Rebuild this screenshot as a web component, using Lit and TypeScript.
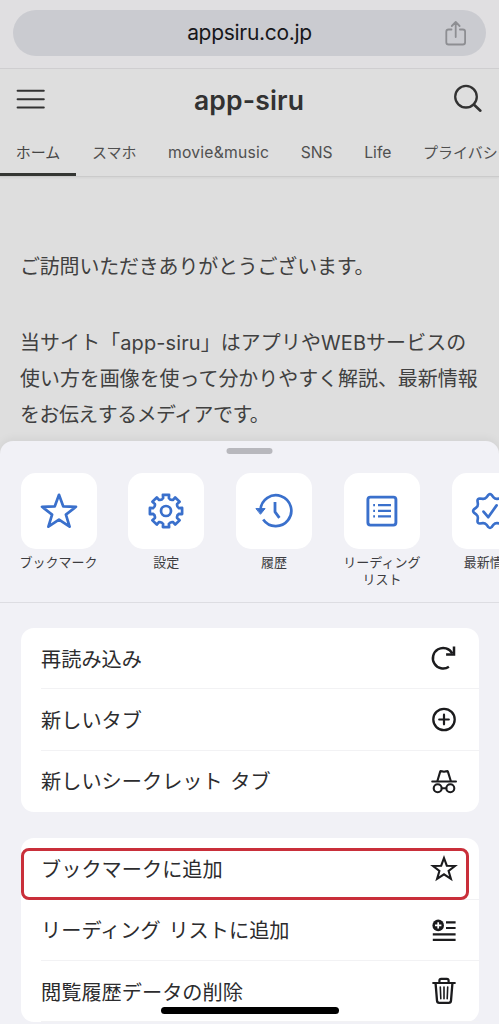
import { LitElement, html, svg, css } from "lit";
import { customElement } from "lit/decorators.js";

const pt = (r: number, a: number) =>
  `${(18 + r * Math.cos(a)).toFixed(2)} ${(18 + r * Math.sin(a)).toFixed(2)}`;

// Eight-toothed gear outline centred on (18, 18)
const gearPath = (() => {
  let d = "";
  for (let i = 0; i < 8; i++) {
    const a = (i * Math.PI) / 4 - Math.PI / 2;
    d += `${i ? "L" : "M"}${pt(13.2, a - 0.22)} L${pt(16.4, a - 0.19)} L${pt(16.4, a + 0.19)} L${pt(13.2, a + 0.22)} Q${pt(11.4, a + Math.PI / 8)} ${pt(13.2, a + Math.PI / 4 - 0.22)} `;
  }
  return d + "Z";
})();

// Eight-pointed badge with soft tips
const badgePath = (() => {
  let d = "";
  for (let i = 0; i < 8; i++) {
    const a = (i * Math.PI) / 4 - Math.PI / 2;
    d += `${i ? "L" : "M"}${pt(16.2, a - 0.1)} Q${pt(17.6, a)} ${pt(16.2, a + 0.1)} L${pt(14, a + 0.26)} Q${pt(13, a + Math.PI / 8)} ${pt(14, a + Math.PI / 4 - 0.26)} `;
  }
  return d + "Z";
})();

const starPath =
  "M18 1.8 22.2 13.3 35 13.8 24.9 21.6 28.6 33.7 18 26.6 7.4 33.7 11.1 21.6 1 13.8 13.8 13.3Z";

const icons: Record<string, unknown> = {
  star: svg`<path d=${starPath} stroke-width="2.7"/>`,
  gear: svg`<path d=${gearPath} stroke-width="2.7"/><circle cx="18" cy="18" r="5" stroke-width="2.7"/>`,
  history: svg`<path d="M4.5 17A15.4 15.4 0 1 1 7.2 26.4" stroke-width="2.7" stroke-linecap="butt"/><path d="M.3 15.6H9.1L4.7 21Z" fill="currentColor" stroke-width="1"/><path d="M19 9V18.8L23.4 24.8" stroke-width="2.8" stroke-linecap="butt"/>`,
  list: svg`<rect x="3.9" y="4.1" width="28" height="28" rx="2.5" stroke-width="2.9"/><path d="M14 12.2H27M14 17.8H27M14 23.3H27M9.2 12.2h1.8M9.2 17.8h1.8M9.2 23.3h1.8" stroke-width="2.2" stroke-linecap="butt"/>`,
  badge: svg`<path d=${badgePath} stroke-width="2.6"/><path d="M11.5 18.6 16.2 24.2 24.6 12.4" stroke-width="2.7"/>`,
};

const rowIcons: Record<string, unknown> = {
  reload: svg`<path d="M22.3 9.4A10.3 10.3 0 1 0 18.9 22.8" stroke-width="2.5" stroke-linecap="butt"/><path d="M24 2.6V10.4H16.1" stroke-width="2.5" stroke-linecap="butt" stroke-linejoin="miter"/>`,
  plus: svg`<circle cx="14" cy="14.5" r="10.7" stroke-width="2.3"/><path d="M14 9.7V19.3M9.2 14.5H18.8" stroke-width="2.2"/>`,
  incognito: svg`<path d="M2.2 14.4H26" stroke-width="2"/><path d="M7.4 14 10.2 4.6Q10.4 3.9 11.2 4.1L14 4.7 16.9 4.1Q17.6 3.9 17.9 4.6L20.8 14" stroke-width="2.1"/><circle cx="7.7" cy="21.3" r="4" stroke-width="2.1"/><circle cx="20.3" cy="21.3" r="4" stroke-width="2.1"/><path d="M11.7 21.3H16.3" stroke-width="2"/>`,
  star: svg`<path d="M14 3 16.8 10.7 25 11 18.6 16 20.9 23.9 14 19.3 7.1 23.9 9.4 16 3 11 11.2 10.7Z" stroke-width="2.1" stroke-linejoin="miter"/>`,
  readLater: svg`<circle cx="8.2" cy="9.4" r="5.8" fill="currentColor" stroke="none"/><path d="M8.2 6.2V12.6M5 9.4H11.4" stroke="#fff" stroke-width="1.7" stroke-linecap="butt"/><path d="M16 6.4H25.6M16 12H25.6M2.8 18.4H25.6M2.8 23.8H25.6" stroke-width="2.2" stroke-linecap="butt"/>`,
  trash: svg`<path d="M3.2 6H24.8" stroke-width="2.2"/><path d="M9.4 5.4V3.6Q9.4 1.8 11.2 1.8H16.8Q18.6 1.8 18.6 3.6V5.4" stroke-width="2.2"/><path d="M5.6 6.6 7 23.6Q7.2 25.8 9.2 25.8H18.8Q20.8 25.8 21 23.6L22.4 6.6" stroke-width="2.3"/><path d="M10.3 10 10.8 21.8M14 10V21.8M17.7 10 17.2 21.8" stroke-width="1.6"/>`,
};

const tiles = [
  { icon: "star", label: ["ブックマーク"] },
  { icon: "gear", label: ["設定"] },
  { icon: "history", label: ["履歴"] },
  { icon: "list", label: ["リーディング", "リスト"] },
  { icon: "badge", label: ["最新情報"] },
];

const groups = [
  [
    { text: "再読み込み", icon: "reload" },
    { text: "新しいタブ", icon: "plus" },
    { text: "新しいシークレット タブ", icon: "incognito" },
  ],
  [
    { text: "ブックマークに追加", icon: "star", marked: true },
    { text: "リーディング リストに追加", icon: "readLater" },
    { text: "閲覧履歴データの削除", icon: "trash" },
  ],
];

@customElement("app-root")
export class AppRoot extends LitElement {
  static styles = css`
    :host {
      display: flex;
      flex-direction: column;
      position: relative;
      box-sizing: border-box;
      width: 100%;
      height: 1024px;
      overflow: hidden;
      background: #dedede;
      font-family: Inter, "Noto Sans CJK JP", sans-serif;
      white-space: nowrap;
    }
    * { box-sizing: border-box; }
    svg { display: block; overflow: visible; fill: none; stroke: currentColor; stroke-linecap: round; stroke-linejoin: round; flex: none; }

    .toolbar { flex: none; height: 69px; padding: 10px 13px 0; background: #e0dfe1; border-bottom: 1px solid #cfced0; }
    .pill {
      display: grid; grid-template-columns: 30px 1fr 30px; align-items: center;
      height: 46px; padding: 0 15px; border-radius: 23px; background: #cacbd0; color: #17171a;
    }
    .url { grid-column: 2; text-align: center; font-size: 21px; line-height: 28px; letter-spacing: -0.3px; }
    .share { color: #8d8e92; margin-left: 2px; }

    .site { flex: none; display: flex; justify-content: space-between; align-items: center; height: 59px; padding: 0 16px; color: #323232; }
    .title { font-size: 26.5px; font-weight: 600; line-height: 34px; padding-top: 3px; letter-spacing: 0.15px; }

    .tabs { flex: none; display: flex; height: 49px; border-bottom: 1px solid #cbcbcb; box-shadow: 0 1px 2px #0000000d; }
    .tab { flex: none; padding: 15px 15.8px 0; height: 48px; font-size: 15px; line-height: 20px; color: #505050; }
    .tab.active { border-bottom: 3px solid #343633; color: #454545; }
    .latin { font-size: 15.7px; }
    .latin.wide { letter-spacing: 0.2px; }

    .article { flex: none; height: 264px; padding: 72px 20px 0; font-size: 19.95px; line-height: 36px; color: #404040; }
    .para { margin: 0 0 40px; }
    .row0 { letter-spacing: -0.14px; }
    .row1 { letter-spacing: 0.12px; }
    .row3 { letter-spacing: -0.5px; }

    .sheet { flex: 1; min-height: 0; background: #f1f1f6; border-radius: 13px 13px 0 0; box-shadow: 0 -2px 10px #0000000f; overflow: hidden; }
    .grip { width: 46px; height: 6px; margin: 7px auto 0; border-radius: 3px; background: #b8b8bd; transform: translateX(-.5px); }
    .tiles { display: flex; gap: 31.8px; height: 149px; padding: 19px 0 0 20.5px; border-bottom: 1px solid #dddde2; }
    .tile { flex: none; width: 76px; display: flex; flex-direction: column; align-items: center; }
    .face { width: 76px; height: 76px; border-radius: 15px; background: #fff; color: #3a70cc; display: grid; place-items: center; }
    .caption { margin-top: 5px; text-align: center; font-size: 13px; line-height: 16.5px; color: #3c3c40; display: flex; flex-direction: column; align-items: center; }

    .group { margin: 25px 20.5px 26.5px; background: #fff; border-radius: 13px; }
    .item { position: relative; height: 61.3px; margin-left: 20.5px; padding-right: 21px; display: flex; align-items: center; justify-content: space-between; border-bottom: 1px solid #f2f2f4; color: #1b1b1d; }
    .group.closed .item:last-child { border-bottom-color: transparent; }
    .label { padding-top: 3px; font-size: 20.2px; line-height: 28px; word-spacing: 2px; color: #2c2c2e; }
    .marker { position: absolute; left: -20px; right: 9.5px; top: 10px; height: 52px; border: 3px solid #c92f3a; border-radius: 8px; }
    .home { position: absolute; left: 160.5px; top: 1007px; width: 178px; height: 6.5px; border-radius: 4px; background: #000; }
  `;

  render() {
    return html`
      <div class="toolbar">
        <div class="pill">
          <span class="url">appsiru.co.jp</span>
          <svg class="share" width="26" height="28" viewBox="0 0 26 28" stroke-width="1.8">
            <path d="M8.5 10.5H5.6Q3.3 10.5 3.3 12.8V23.2Q3.3 25.5 5.6 25.5H19.8Q22.1 25.5 22.1 23.2V12.8Q22.1 10.5 19.8 10.5H16.9M12.7 18V3.2M8.8 7 12.7 3 16.6 7"/>
          </svg>
        </div>
      </div>
      <div class="site">
        <svg width="29" height="22" viewBox="0 0 29 22" stroke-width="2"><path d="M1.6 2.8H27.8M1.6 11.2H27.8M1.6 19.6H27.8"/></svg>
        <span class="title">app-siru</span>
        <svg width="30" height="30" viewBox="0 0 30 30" stroke-width="2.3"><circle cx="13" cy="12.7" r="10.8"/><path d="M20.8 20.5 27.4 26.7" stroke-width="2.6"/></svg>
      </div>
      <nav class="tabs">
        <span class="tab active">ホーム</span>
        <span class="tab">スマホ</span>
        <span class="tab latin wide">movie&amp;music</span>
        <span class="tab latin">SNS</span>
        <span class="tab latin">Life</span>
        <span class="tab">プライバシー</span>
      </nav>
      <div class="article">
        <p class="para row0">ご訪問いただきありがとうございます。</p>
        <p class="para"><span class="row1">当サイト「app-siru」はアプリやWEBサービスの</span><br>使い方を画像を使って分かりやすく解説、最新情報<br><span class="row3">をお伝えするメディアです。</span></p>
      </div>
      <div class="sheet">
        <div class="grip"></div>
        <div class="tiles">
          ${tiles.map((t) => html`
            <div class="tile">
              <div class="face"><svg width="36" height="36" viewBox="0 0 36 36">${icons[t.icon]}</svg></div>
              <div class="caption">${t.label.map((l) => html`<span>${l}</span>`)}</div>
            </div>`)}
        </div>
        ${groups.map((g, i) => html`
          <div class="group ${i === 0 ? "closed" : ""}">
            ${g.map((r: any) => html`
              <div class="item">
                <span class="label">${r.text}</span>
                <svg width="28" height="28" viewBox="0 0 28 28">${rowIcons[r.icon]}</svg>
                ${r.marked ? html`<span class="marker"></span>` : null}
              </div>`)}
          </div>`)}
      </div>
      <div class="home"></div>
    `;
  }
}
